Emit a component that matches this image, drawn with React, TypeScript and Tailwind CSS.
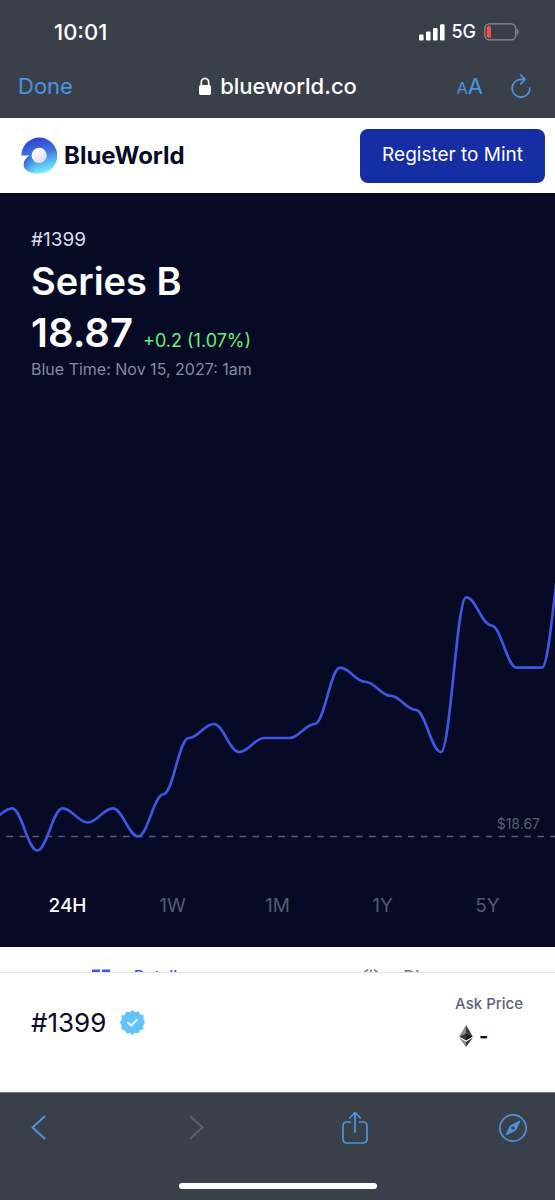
import { useState } from 'react'

const RANGES = ['24H', '1W', '1M', '1Y', '5Y']

const STEP = 25.23
const START_X = -13.2
const BASELINE = 266.5
const UNIT = 14.07

// price ticks relative to the opening price
const TICKS = [1, 2, -1, 2, 1, 2, 0, 3, 7, 8, 6, 7, 7, 8, 12, 11, 10, 9, 6, 17, 15, 12, 12, 22]

function buildPath(ticks: number[]) {
  const points = ticks.map((t, i) => [START_X + i * STEP, BASELINE - t * UNIT])
  return points.reduce((d, [x, y], i) => {
    if (i === 0) return `M${x},${y}`
    const [px, py] = points[i - 1]
    const k = STEP * 0.38
    return `${d} C${px + k},${py} ${x - k},${y} ${x},${y}`
  }, '')
}

function BrowserTop() {
  return (
    <div className="bg-[#3a4049] text-white">
      <div className="flex h-16 items-center justify-between pl-[54px] pr-9">
        <span className="text-[22px] font-medium">10:01</span>
        <div className="flex items-center gap-2">
          <div className="flex items-center gap-1.5">
            <svg width="26" height="17" viewBox="0 0 26 17" fill="currentColor" aria-hidden="true">
              <rect x="0" y="10.5" width="4.6" height="6" rx="1.2" />
              <rect x="7" y="7.5" width="4.6" height="9" rx="1.2" />
              <rect x="14" y="4" width="4.6" height="12.5" rx="1.2" />
              <rect x="21" y="0.3" width="4.6" height="16.2" rx="1.2" />
            </svg>
            <span className="text-lg font-medium">5G</span>
          </div>
          <svg width="35" height="18" viewBox="0 0 35 18" aria-hidden="true">
            <rect x="0.8" y="0.8" width="31" height="16" rx="4.6" fill="none" stroke="#8b8f95" strokeWidth="1.3" />
            <rect x="2.8" y="2.8" width="4.2" height="12" rx="1.6" fill="#f4513f" />
            <path d="M33.2 6.2c2 .9 2 4.3 0 5.2z" fill="#8b8f95" />
          </svg>
        </div>
      </div>
      <div className="grid h-[54px] grid-cols-[1fr_auto_1fr] items-start px-[18px] pt-1">
        <button className="justify-self-start text-[22px] leading-9 text-[#4b94e0]">Done</button>
        <div className="flex items-center gap-2">
          <svg width="14" height="19" viewBox="0 0 14 19" aria-hidden="true">
            <path d="M3.3 9V5.6a3.7 4.2 0 0 1 7.4 0V9" fill="none" stroke="white" strokeWidth="1.7" />
            <rect x="1" y="8" width="12" height="10" rx="1.8" fill="white" />
          </svg>
          <span className="text-[22px] font-medium leading-9">blueworld.co</span>
        </div>
        <div className="flex h-9 items-center gap-7 justify-self-end pr-1.5 text-[#4b94e0]">
          <button className="flex items-baseline" aria-label="Text size">
            <span className="text-base">A</span>
            <span className="text-[22px]">A</span>
          </button>
          <button aria-label="Reload">
            <svg width="20" height="24" viewBox="0 0 20 24" fill="none" stroke="currentColor" strokeWidth="1.7" strokeLinecap="round" strokeLinejoin="round">
              <path d="M13.6 5.4H10A8.9 8.9 0 1 0 18.9 14" />
              <path d="M9.8 1l4.2 4.4-4.2 4.4" />
            </svg>
          </button>
        </div>
      </div>
    </div>
  )
}

function Logo() {
  return (
    <a href="#" className="flex items-center gap-[7px] text-[#070a24]">
      <svg width="36" height="37" viewBox="0 0 36 37" aria-hidden="true">
        <defs>
          <linearGradient id="ring" x1="0.4" y1="0" x2="0.65" y2="1">
            <stop offset="0" stopColor="#3340cd" />
            <stop offset="0.45" stopColor="#4078e2" />
            <stop offset="0.8" stopColor="#5fcdf3" />
            <stop offset="1" stopColor="#84f0f4" />
          </linearGradient>
          <linearGradient id="tail" x1="0" y1="0" x2="1" y2="0.6">
            <stop offset="0" stopColor="#3645d2" />
            <stop offset="1" stopColor="#56b9f0" stopOpacity="0" />
          </linearGradient>
          <linearGradient id="core" x1="0" y1="0" x2="1" y2="1">
            <stop offset="0.2" stopColor="#ffffff" />
            <stop offset="1" stopColor="#cfd3f3" />
          </linearGradient>
        </defs>
        <path d="M0.3 18.6A18 18 0 1 1 18 36.6C8 36.6 2.6 32.5 2.7 27.5C2.7 24 5 21 8.6 18.6z" fill="url(#ring)" />
        <path d="M8.6 18.6C5 21 2.7 24 2.7 27.5C2.6 32.5 8 36.6 18 36.6L18 25C12 25 10 22 8.6 18.6z" fill="url(#tail)" />
        <circle cx="18.2" cy="18.4" r="7.6" fill="url(#core)" />
      </svg>
      <span className="text-2xl font-bold">BlueWorld</span>
    </a>
  )
}

function PriceChart() {
  return (
    <svg className="block w-full" viewBox="0 0 555 300" role="img" aria-label="Price chart">
      <line x1="6.5" x2="555" y1="266.5" y2="266.5" stroke="#5a5e72" strokeWidth="1.3" strokeDasharray="6.5 6.45" />
      <path d={buildPath(TICKS)} fill="none" stroke="#3f57e6" strokeWidth="2.6" />
      <text x="540" y="259" textAnchor="end" fontSize="14" fill="#5a5e74">
        $18.67
      </text>
    </svg>
  )
}

function BrowserBottom() {
  return (
    <div className="flex flex-1 flex-col justify-between border-t border-[#6b7478] bg-[#3a4049]">
      <div className="flex items-center justify-between pl-6 pr-7 pt-[18px] text-[#4b94e0]">
        <button aria-label="Back" className="flex w-7 justify-center">
          <svg width="15" height="25" viewBox="0 0 15 25" fill="none" stroke="currentColor" strokeWidth="2" strokeLinecap="round" strokeLinejoin="round">
            <path d="M13.5 1.5l-12 11 12 11" />
          </svg>
        </button>
        <button aria-label="Forward" className="flex w-7 justify-center text-[#5b6068]">
          <svg width="15" height="25" viewBox="0 0 15 25" fill="none" stroke="currentColor" strokeWidth="2" strokeLinecap="round" strokeLinejoin="round">
            <path d="M1.5 1.5l12 11-12 11" />
          </svg>
        </button>
        <button aria-label="Share" className="flex w-7 justify-center">
          <svg width="26" height="33" viewBox="0 0 26 33" fill="none" stroke="currentColor" strokeWidth="1.7" strokeLinecap="round" strokeLinejoin="round">
            <path d="M8.5 11H4.5a3.5 3.5 0 0 0-3.5 3.5v14A3.5 3.5 0 0 0 4.5 32h17a3.5 3.5 0 0 0 3.5-3.5v-14a3.5 3.5 0 0 0-3.5-3.5h-4" />
            <path d="M13 21V2M7.7 7L13 1.6 18.3 7" />
          </svg>
        </button>
        <button aria-label="Open in Safari" className="flex w-7 justify-center">
          <svg width="28" height="28" viewBox="0 0 28 28">
            <circle cx="14" cy="14" r="13.1" fill="none" stroke="currentColor" strokeWidth="1.7" />
            <path d="M21 7L16.6 16.2 7 21l4.4-9.2z" fill="currentColor" stroke="currentColor" strokeLinejoin="round" />
            <circle cx="14" cy="14" r="1.8" fill="#3a4049" />
          </svg>
        </button>
      </div>
      <div className="mx-auto mb-[11px] h-1.5 w-[198px] rounded-full bg-white" />
    </div>
  )
}

export default function App() {
  const [range, setRange] = useState('24H')

  return (
    <div className="flex min-h-screen flex-col bg-white font-['Inter','Liberation_Sans',sans-serif]">
      <BrowserTop />

      <header className="flex h-[75px] items-center justify-between pl-[21px] pr-2.5">
        <Logo />
        <button className="h-[54px] rounded-lg bg-[#152da5] px-[22px] text-[19px] text-white">
          Register to Mint
        </button>
      </header>

      <main className="bg-[#060a24]">
        <div className="px-[31px] pt-8 text-white">
          <p className="text-[19px] leading-[30px] text-[#dcdef0]">#1399</p>
          <h1 className="text-[38px] font-semibold leading-[52px]">Series B</h1>
          <div className="flex items-baseline gap-2.5">
            <span className="text-[40px] font-semibold leading-[52px]">18.87</span>
            <span className="text-lg text-[#6bee7a]">+0.2 (1.07%)</span>
          </div>
          <p className="text-base leading-5 text-[#8688a0]">Blue Time: Nov 15, 2027: 1am</p>
        </div>
        <div className="pt-[191px]">
          <PriceChart />
        </div>
        <div className="grid grid-cols-5 px-[15px] pb-[23px] pt-[18px]">
          {RANGES.map((r) => (
            <button
              key={r}
              onClick={() => setRange(r)}
              className={`text-[19px] leading-9 ${r === range ? 'font-medium text-white' : 'text-[#555970]'}`}
            >
              {r}
            </button>
          ))}
        </div>
      </main>

      <nav className="grid h-[25px] grid-cols-2 items-start overflow-hidden pt-[17px] text-base font-medium">
        <a href="#details" className="flex justify-center gap-6 text-[#3f57e6]">
          <svg className="mt-1" width="18" height="18" viewBox="0 0 18 18" fill="currentColor" aria-hidden="true">
            <path d="M0 1.5h8v7H0zM10 1.5h8v7h-8zM0 10.5h8V18H0zM10 10.5h8V18h-8z" />
          </svg>
          Details
        </a>
        <a href="#discover" className="flex justify-center gap-6 text-[#74778c]">
          <svg className="mt-1" width="18" height="18" viewBox="0 0 18 18" fill="none" stroke="currentColor" strokeWidth="1.6" aria-hidden="true">
            <path d="M6.2 1.8A8.3 8.3 0 0 0 6.2 17.2M11.8 1.8A8.3 8.3 0 0 1 11.8 17.2M9 1.5v4M9 13.5v4" />
          </svg>
          Discover
        </a>
      </nav>

      <section className="flex h-[120px] justify-between border-t border-[#e2e4ee] pl-[31px] pr-8 text-[#070a24]">
        <div className="flex h-[98px] items-center gap-3.5">
          <span className="text-[26px]">#1399</span>
          <svg width="25" height="25" viewBox="0 0 25 25" aria-hidden="true">
            <path
              d="M12.5 0l2.7 2.3 3.5-1 1.4 3.3 3.5.7-.1 3.600L25 12.5l-1.9 3.2.3 3.6-3.5.9-1.4 3.3-3.5-.7L12.5 25l-2.7-2.2-3.5.8-1.4-3.4-3.4-.8.2-3.6L0 12.5l1.7-3.3-.2-3.6 3.4-.9 1.4-3.3 3.5.9z"
              fill="#63c3fa"
            />
            <path d="M8 12.7l3.2 3 5.8-6" fill="none" stroke="white" strokeWidth="1.8" strokeLinecap="round" strokeLinejoin="round" />
          </svg>
        </div>
        <div className="pt-[19px]">
          <p className="text-[15px] font-medium leading-6 text-[#5b5f7e]">Ask Price</p>
          <div className="flex items-center gap-1.5 pl-1 pt-1">
            <svg width="14" height="22" viewBox="0 0 14 22" aria-hidden="true">
              <path d="M7 0v8.3l6.8 3.1z" fill="#3b3b3b" />
              <path d="M7 0L.2 11.4 7 8.3z" fill="#8a8a8a" />
              <path d="M7 8.3v7.2l6.8-4.1z" fill="#141414" />
              <path d="M.2 11.4L7 15.5V8.3z" fill="#3b3b3b" />
              <path d="M7 16.8V22l6.8-9.2z" fill="#3b3b3b" />
              <path d="M7 22v-5.2L.2 12.8z" fill="#8a8a8a" />
            </svg>
            <span className="text-xl font-bold leading-8">-</span>
          </div>
        </div>
      </section>

      <BrowserBottom />
    </div>
  )
}
